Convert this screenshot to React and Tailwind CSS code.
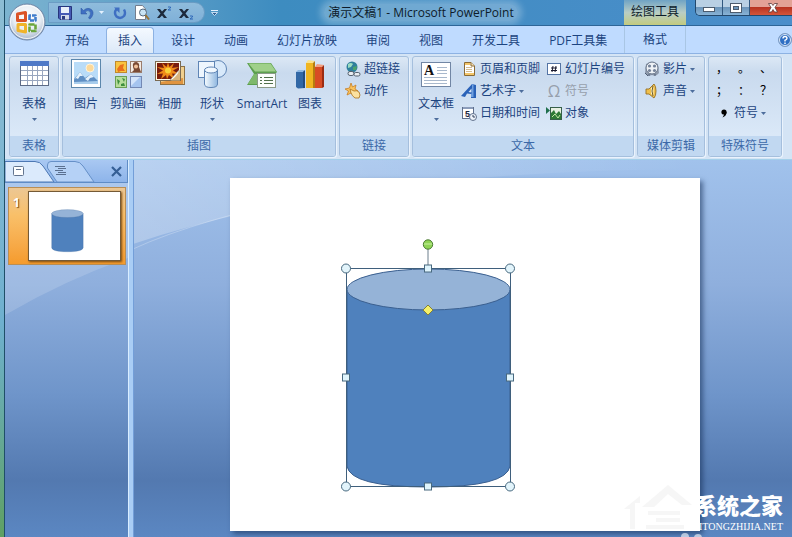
import { Fragment, useState } from "react";

const TABS = ["开始", "插入", "设计", "动画", "幻灯片放映", "审阅", "视图", "开发工具", "PDF工具集"];

const MARKS = ["，", "。", "、", "；", "：", "？"];

function Caret({ light = false }) {
  return (
    <svg className="h-[3px] w-[5px] shrink-0" viewBox="0 0 5 3">
      <path d="M0 0H5L2.5 3Z" fill={light ? "#e4f1ff" : "#4d6d9c"} />
    </svg>
  );
}

/* ---------- large icons, 32x32 ---------- */

function TableIcon() {
  return (
    <svg className="size-8" viewBox="0 0 32 32">
      <rect x="2.5" y="3.5" width="28" height="24" fill="#fff" stroke="#5d6b86" />
      <rect x="2" y="3" width="29" height="5" fill="#4f79c7" />
      <path d="M3 12.500H30M3 17.500H30M3 22.500H30M9.500 8V27M14.500 8V27M19.500 8V27M24.500 8V27" stroke="#98a6bf" fill="none" />
    </svg>
  );
}

function PictureIcon() {
  return (
    <svg className="size-8" viewBox="0 0 32 32">
      <rect x="1.500" y="1.500" width="29" height="28" fill="#fff" stroke="#5c87ac" />
      <rect x="4" y="4" width="24" height="22" fill="#b9dcf8" />
      <circle cx="20" cy="10" r="4" fill="#fbd99a" stroke="#fff2d8" />
      <path d="M4 25V21L10 14L15 20L21 16L28 23V26H4Z" fill="#5f8fc4" />
      <path d="M4 22L10 14L13 18L10 18L8 21L6 20Z" fill="#e5f1fb" />
      <path d="M15 21L21 16L24 19L20 20L18 23Z" fill="#e5f1fb" />
      <path d="M4 26V24L28 23V26Z" fill="#a9cdec" />
    </svg>
  );
}

function ClipArtIcon() {
  return (
    <svg className="size-8" viewBox="0 0 32 32">
      <rect x="3.500" y="3.500" width="11" height="11" fill="#f9c440" stroke="#c08a2c" />
      <path d="M5 11L8 7L12 6L11 10L13 13H9L6 14Z" fill="#e8701c" />
      <rect x="18.500" y="3.500" width="11" height="11" fill="#f4ebe4" stroke="#9a7c6c" />
      <path d="M21 9Q20 4 24.500 4Q28 5 27 9L29 14H20L22 12Z" fill="#7b4a34" />
      <circle cx="24" cy="8.500" r="2" fill="#f0c09a" />
      <rect x="3.500" y="18.500" width="11" height="11" fill="#b6dd9a" stroke="#6a9f55" />
      <path d="M5 21L8 23L6 27ZM10 20L13 21L12 24ZM9 26L12 25L13 28H9Z" fill="#3d8f3c" />
      <rect x="18.500" y="18.500" width="11" height="11" fill="#a5c4ef" stroke="#7388b4" />
      <path d="M19 19H28L19 28Z" fill="#d4e4fa" />
    </svg>
  );
}

function AlbumIcon() {
  return (
    <svg className="size-8" viewBox="0 0 32 32">
      <rect x="6.500" y="8.500" width="24" height="18" fill="#f0cf8e" stroke="#8b7046" />
      <path d="M7 24L29 20V26H7Z" fill="#e09440" />
      <rect x="1.500" y="3.500" width="25" height="19" fill="#fff8e4" stroke="#7a6a52" />
      <rect x="3" y="5" width="22" height="16" fill="#7a1c0c" />
      <path d="M14 4.500L15.500 9L20 5L18 10L25 9L19 12.500L25 16L18 15.500L20 21L15 17L13 21L12 17L7 21L9 15.500L3 16L9 12.500L3 9L10 10L8 5L12.500 9Z" fill="#f08a18" />
      <circle cx="14" cy="12.500" r="3" fill="#f8d038" />
      <path d="M25 12L16 22H25Z" fill="#fdfbf2" stroke="#9a8c70" strokeWidth="0.6" />
      <path d="M26 12Q23 18 17 22.500H26Z" fill="#d8b47c" />
    </svg>
  );
}

function ShapesIcon() {
  return (
    <svg className="size-8" viewBox="0 0 32 32">
      <defs>
        <linearGradient id="shapeFill" x1="0" x2="1">
          <stop offset="0" stopColor="#f5fbff" />
          <stop offset="1" stopColor="#8fb6df" />
        </linearGradient>
      </defs>
      <circle cx="22" cy="11" r="8.500" fill="#d8e9fa" stroke="#5f85b5" />
      <rect x="2.500" y="3.500" width="16" height="16" fill="#eef6fe" stroke="#5f85b5" />
      <path d="M8.500 12V26Q8.500 29.500 15 29.500Q21.500 29.500 21.500 26V12" fill="url(#shapeFill)" stroke="#5f85b5" />
      <ellipse cx="15" cy="12" rx="6.500" ry="3" fill="#f1f8ff" stroke="#5f85b5" />
    </svg>
  );
}

function SmartArtIcon() {
  return (
    <svg className="size-8" viewBox="0 0 32 32">
      <path d="M1 5H25L31 14L25 20V27H1L8 16Z" fill="#5c9f4e" />
      <path d="M2.500 5.500H24.500L30 13.500H9Z" fill="#9fd08a" />
      <path d="M8 16L2 26H12V16Z" fill="#7fb96c" />
      <rect x="11.500" y="15.500" width="18" height="14" fill="#fbfdfb" stroke="#8a9a88" />
      <path d="M14 19.500H16M14 22.500H16M14 25.500H16M18 19.500H27M18 22.500H27M18 25.500H27" stroke="#4f6e4a" />
    </svg>
  );
}

function ChartIcon() {
  return (
    <svg className="size-8" viewBox="0 0 32 32">
      <path d="M2 14L9 13L11 14V30L4 30.500L2 29Z" fill="#3268a6" />
      <path d="M2 14L4 12L11 12L9 14Z" fill="#8db8e4" />
      <path d="M9 14L11 12V30L9 30Z" fill="#244d80" />
      <path d="M12 5L19 4V30H12Z" fill="#f0b520" />
      <path d="M12 5L14 2L21 3L19 5Z" fill="#fbe28a" />
      <path d="M19 5L21 3V30H19Z" fill="#b57d10" />
      <path d="M21 9L28 8V30H21Z" fill="#d84c24" />
      <path d="M21 9L23 6L30 7L28 9Z" fill="#f2a080" />
      <path d="M28 9L30 7V29L28 30Z" fill="#9c2c12" />
    </svg>
  );
}

function TextBoxIcon() {
  return (
    <svg className="size-8" viewBox="0 0 32 32">
      <rect x="1.500" y="4.500" width="29" height="24" fill="#fff" stroke="#7186a4" />
      <path d="M17 9.500H27M17 12.500H27M17 15.500H27M4 19.500H27M4 22.500H27M4 25.500H27" stroke="#a8b8cc" />
      <text x="4" y="17" fontSize="14" fontWeight="bold" fontFamily="Liberation Serif, serif" fill="#111">A</text>
    </svg>
  );
}

/* ---------- small icons, 16x16 ---------- */

function LinkIcon() {
  return (
    <svg className="size-4 shrink-0" viewBox="0 0 16 16">
      <circle cx="7" cy="6" r="5.500" fill="#2f7f9c" />
      <path d="M3 3Q6 1 8 3L6 6L3 7Z" fill="#9bdcc0" />
      <path d="M8 6L12 5L11 9L8 9Z" fill="#4ba36c" />
      <rect x="3" y="10.500" width="6" height="4" rx="2" fill="#e8edf2" stroke="#55606e" />
      <rect x="9" y="11.500" width="6" height="3.500" rx="1.700" fill="#e8edf2" stroke="#55606e" />
    </svg>
  );
}

function ActionIcon() {
  return (
    <svg className="size-4 shrink-0" viewBox="0 0 16 16">
      <path d="M6 0L7.500 4L11 2L10 6L13 8L9 9L9 13L6 10L2 12L3.500 8L0 6L4.500 5Z" fill="#fbc35c" stroke="#c67f24" strokeWidth="0.8" />
      <path d="M5 6L9 8Q12 7 14 9Q16 12 14 15H10Q7 13 6 10Z" fill="#fbe1a0" stroke="#a9711e" strokeWidth="0.8" />
    </svg>
  );
}

function HeaderFooterIcon() {
  return (
    <svg className="size-4 shrink-0" viewBox="0 0 16 16">
      <path d="M3.500 1.500H10L13.500 5V14.500H3.500Z" fill="#fff" stroke="#8a6b36" />
      <path d="M4 2H9.500V4H4ZM4 12H13V14H4Z" fill="#f4c66a" />
      <path d="M10 1.500V5H13.500" fill="#f7e2b4" stroke="#8a6b36" />
      <path d="M5 6.500H11M5 8.500H11M5 10.500H11" stroke="#d5bd90" />
    </svg>
  );
}

function WordArtIcon() {
  return (
    <svg className="size-4 shrink-0" viewBox="0 0 16 16">
      <path d="M0 13L11 1L15 2V15H10V11L6 10.500L4 14Z" fill="#2a62b8" />
      <path d="M7.500 9L10.500 5.500V9.500Z" fill="#d4e5fa" />
      <path d="M11 1L12.500 2V14H10V11L11 10Z" fill="#6fa0e0" />
    </svg>
  );
}

function DateIcon() {
  return (
    <svg className="size-4 shrink-0" viewBox="0 0 16 16">
      <rect x="1.500" y="2.500" width="11" height="11" fill="#fff" stroke="#5f6f8c" />
      <rect x="2" y="2" width="10" height="2" fill="#8b9cba" />
      <text x="4" y="12" fontSize="9" fontWeight="bold" fontFamily="Liberation Sans, sans-serif" fill="#1a2540">5</text>
      <circle cx="12" cy="12" r="3.500" fill="#eef3fa" stroke="#63738e" />
      <path d="M12 10V12H14" stroke="#32415c" fill="none" />
    </svg>
  );
}

function SlideNumberIcon() {
  return (
    <svg className="size-4 shrink-0" viewBox="0 0 16 16">
      <rect x="1.500" y="2.500" width="13" height="11" fill="#fff" stroke="#5474a4" />
      <path d="M7 5L6 11M10 5L9 11M5 7H11M5 9.500H11" stroke="#1a1a2e" fill="none" />
    </svg>
  );
}

function ObjectIcon() {
  return (
    <svg className="size-4 shrink-0" viewBox="0 0 16 16">
      <rect x="4.500" y="2.500" width="11" height="12" fill="#e8f0e2" stroke="#38604a" />
      <path d="M5 14V8L8 5L10 9L13 6L15 9V14Z" fill="#2f7a36" />
      <path d="M6 12L9 9L12 13L14 10" stroke="#c3e6a4" fill="none" />
      <path d="M0 2L4 5.500L0 9Z" fill="#1f6f4c" />
    </svg>
  );
}

function MovieIcon() {
  return (
    <svg className="size-4 shrink-0" viewBox="0 0 16 16">
      <path d="M2 3Q8 -1 14 3L15 12Q12 16 8 14Q3 16 1 12Z" fill="#8e9aac" />
      <circle cx="8" cy="7" r="6" fill="#eef2f6" stroke="#67758a" />
      <circle cx="5.500" cy="5" r="1.600" fill="#75839a" />
      <circle cx="10.500" cy="5" r="1.600" fill="#75839a" />
      <circle cx="5.500" cy="9.500" r="1.600" fill="#75839a" />
      <circle cx="10.500" cy="9.500" r="1.600" fill="#75839a" />
      <path d="M1 12L4 15M5 13V15M11 13V15" stroke="#4f5d74" />
    </svg>
  );
}

function SoundIcon() {
  return (
    <svg className="size-4 shrink-0" viewBox="0 0 16 16">
      <path d="M2 6H5L10 1Q12 3 12 8Q12 13 10 15L5 11H2Z" fill="#f0c04c" stroke="#967022" strokeWidth="0.9" />
      <path d="M7 5V11L9.500 13V3Z" fill="#fdf0b8" />
      <path d="M9 3Q7 8 9 13" stroke="#6b5a30" fill="none" />
    </svg>
  );
}

function CommaIcon() {
  return (
    <svg className="h-4 w-[22px] shrink-0" viewBox="0 0 22 16">
      <circle cx="15" cy="7" r="2.600" fill="#000" />
      <path d="M17.600 7Q17.600 11 13.500 12.500Q15.500 10 15 8Z" fill="#000" />
    </svg>
  );
}

/* ---------- title bar icons ---------- */

function SaveIcon() {
  return (
    <svg className="size-4" viewBox="0 0 16 16">
      <path d="M1.500 1.500H14.500V14.500H3L1.500 13Z" fill="#4659b4" stroke="#26357c" />
      <rect x="4" y="2" width="8" height="6" fill="#e9effa" />
      <rect x="4" y="10" width="8" height="4.500" fill="#d3d9e8" />
      <rect x="5" y="11" width="3" height="3.500" fill="#2b3a80" />
    </svg>
  );
}

function UndoIcon() {
  return (
    <svg className="size-4" viewBox="0 0 16 16">
      <path d="M2 3V9H8L6 7Q9 4.500 11 6.500Q12.500 9 9.500 13L11 14Q16 9 13 5Q9 1.500 4.500 5.500Z" fill="#3f6fc2" stroke="#2c569f" strokeWidth="0.5" />
    </svg>
  );
}

function RedoIcon() {
  return (
    <svg className="size-4" viewBox="0 0 16 16">
      <path d="M4.500 4Q1.500 8 4.500 11.500Q8.500 14.500 12 11Q14 8 12 4.500" stroke="#3f6fc2" strokeWidth="2.400" fill="none" />
      <path d="M2 2.500H7.500V8Z" fill="#3f6fc2" />
    </svg>
  );
}

function PreviewIcon() {
  return (
    <svg className="size-4" viewBox="0 0 16 16">
      <path d="M1.500 0.500H8.500L11.500 4V14.500H1.500Z" fill="#fff" stroke="#747e8e" />
      <circle cx="9" cy="7.500" r="3.500" fill="#c9e4f5" stroke="#56697e" />
      <path d="M11.500 10L15 14.500" stroke="#9c7434" strokeWidth="2" />
    </svg>
  );
}

function ScriptIcon({ low = false }) {
  return (
    <svg className="size-4" viewBox="0 0 16 16">
      <path d="M1 4H4L6 6.500L8.500 4H11L7.500 8.500L11 13H8L6 10.500L3.500 13H1L4.500 8.500Z" fill="#1d2a3c" />
      <path d={low ? "M12 11H14.500V12L12 14H15" : "M12 2H14.500V3L12 5H15"} stroke="#2f68b8" fill="none" />
    </svg>
  );
}

function OfficeOrb() {
  return (
    <svg className="size-10" viewBox="0 0 40 40">
      <defs>
        <radialGradient id="orb" cx="0.5" cy="0.35" r="0.65">
          <stop offset="0" stopColor="#ffffff" />
          <stop offset="0.6" stopColor="#e6ecf3" />
          <stop offset="1" stopColor="#a3b3ca" />
        </radialGradient>
      </defs>
      <circle cx="20" cy="20" r="18" fill="url(#orb)" stroke="#6f86a6" />
      <circle cx="20" cy="20" r="16.500" fill="none" stroke="#fff" opacity="0.8" />
      <g fill="none" strokeLinejoin="round">
        <path d="M18.500 10.500L10.500 12V18.500H18.500Z" stroke="#db5326" strokeWidth="3" />
        <path d="M18.500 22.500H11V28.500L18.500 30Z" stroke="#f0b32a" strokeWidth="3" />
        <path d="M22.500 14V18.500H28.500V13.500H22.500Z" stroke="#3f7ccc" strokeWidth="2.600" strokeDasharray="4 1" />
        <path d="M22.500 22.500H28.500V29H22.500Z" stroke="#6aa53c" strokeWidth="2.600" strokeDasharray="5 1" />
      </g>
    </svg>
  );
}

/* ---------- ribbon pieces ---------- */

function BigButton({ icon, label, caret, width = "w-[42px]" }) {
  return (
    <button className={"flex flex-col items-center " + width}>
      {icon}
      <span className="mt-1 leading-5 whitespace-nowrap">{label}</span>
      {caret && <span className="mt-1 flex"><Caret /></span>}
    </button>
  );
}

function SmallButton({ icon, label, caret, disabled }) {
  return (
    <button
      disabled={disabled}
      className={"flex h-[22px] items-center gap-[3px] whitespace-nowrap " + (disabled ? "text-[#97a0ac]" : "")}
    >
      {icon}
      <span>{label}</span>
      {caret && <Caret />}
    </button>
  );
}

function Group({ title, className = "", children }) {
  return (
    <section className="flex flex-col overflow-hidden rounded-[3px] border border-[#a5bfdd] bg-linear-to-b from-[#dce8f5] from-0% via-[#c9daee] via-16% to-[#e0edfb] shadow-[1px_1px_0_#eaf3fd]">
      <div className={"flex h-[79px] items-start pt-px " + className}>{children}</div>
      <h2 className="bg-[#c1d8f1] text-center leading-5 whitespace-nowrap text-[#3c69a8]">{title}</h2>
    </section>
  );
}

function Cylinder() {
  return (
    <g stroke="#3a5f8f" strokeWidth="1">
      <path d="M117 111.500V288Q120 309 198.500 309Q277 309 280 288V111.500Z" fill="#4f81bd" />
      <ellipse cx="198.500" cy="111.500" rx="81.500" ry="20.500" fill="#95b3d7" />
    </g>
  );
}

const CORNERS = [[116, 90.5], [280, 90.5], [116, 308.5], [280, 308.5]];
const SIDES = [[198, 90.5], [116, 199.5], [280, 199.5], [198, 308.5]];

function Slide() {
  return (
    <svg className="block w-full bg-white shadow-[3px_3px_5px_rgba(25,50,90,0.6)]" viewBox="0 0 470 353">
      <Cylinder />
      <rect x="116.500" y="90.500" width="164" height="218" fill="none" stroke="#3f5f7c" />
      <path d="M198 71V87" stroke="#6c7f8c" />
      <circle cx="198" cy="66.500" r="4.700" fill="#8fd455" stroke="#4b7a35" />
      <path d="M194 66H202" stroke="#c9f0a4" />
      {CORNERS.map(([x, y]) => (
        <circle key={x + "-" + y} cx={x} cy={y} r="4.500" fill="#e2f4fb" stroke="#48697f" />
      ))}
      {SIDES.map(([x, y]) => (
        <rect key={x + "-" + y} x={x - 3.5} y={y - 3.5} width="7" height="7" fill="#dff4fc" stroke="#48697f" />
      ))}
      <path d="M198 127L203 132L198 137L193 132Z" fill="#f4f06a" stroke="#83803a" />
    </svg>
  );
}

function TitleBar() {
  return (
    <header className="flex h-[25px] items-center bg-linear-to-r from-[#7db4d0] via-[#3d8cc0] via-35% to-[#4b8ecb]">
      <div className="ml-[43px] flex h-[21px] items-center rounded-r-full border border-[#6b9cc4] bg-linear-to-b from-[#8fbcdc] to-[#7fb0d8] pr-[10px] pl-2">
        <button aria-label="保存"><SaveIcon /></button>
        <button aria-label="撤消" className="ml-[6px]"><UndoIcon /></button>
        <button aria-label="撤消列表" className="ml-1"><Caret light /></button>
        <button aria-label="恢复" className="ml-2"><RedoIcon /></button>
        <button aria-label="打印预览" className="ml-[6px]"><PreviewIcon /></button>
        <button aria-label="上标" className="ml-[6px]"><ScriptIcon /></button>
        <button aria-label="下标" className="ml-[6px]"><ScriptIcon low /></button>
      </div>
      <button aria-label="自定义快速访问工具栏" className="ml-[6px]">
        <svg className="h-[6px] w-[7px]" viewBox="0 0 7 6">
          <path d="M0 0.500H7" stroke="#e4f1ff" />
          <path d="M0.500 2.500H6.500L3.500 5.500Z" fill="#2d5f95" stroke="#e4f1ff" strokeWidth="0.800" />
        </svg>
      </button>
      <h1 className="flex-1 text-center whitespace-nowrap text-[#0d1b2a]">
        <span className="rounded-full bg-white/25 px-1 shadow-[0_0_6px_4px_rgba(255,255,255,0.25)]">演示文稿1 - Microsoft PowerPoint</span>
      </h1>
      <div className="h-full w-[62px] bg-linear-to-b from-[#6fa3c4] via-[#b9cdc4] to-[#c3cb7e] text-center leading-6 text-[#0d1b2a]">绘图工具</div>
      <div className="ml-[9px] flex h-4 w-[97px] self-start overflow-hidden rounded-bl-[5px] border-b border-l border-[#23486c]">
        <button aria-label="最小化" className="flex w-[27px] items-center justify-center border-r border-[#31587f] bg-linear-to-b from-[#b9d0e4] from-45% via-[#6d96bb] via-50% to-[#88b3d6]">
          <svg className="h-3 w-3" viewBox="0 0 12 12"><rect x="0.500" y="5.500" width="11" height="4" fill="#fff" stroke="#4c5c6e" /></svg>
        </button>
        <button aria-label="最大化" className="flex w-[27px] items-center justify-center border-r border-[#31587f] bg-linear-to-b from-[#b9d0e4] from-45% via-[#6d96bb] via-50% to-[#88b3d6]">
          <svg className="h-3 w-3" viewBox="0 0 12 12">
            <rect x="0.500" y="1.500" width="11" height="9" fill="#fff" stroke="#4c5c6e" />
            <rect x="3.500" y="4.500" width="5" height="3" fill="#6d96bb" stroke="#4c5c6e" />
          </svg>
        </button>
        <button aria-label="关闭" className="flex flex-1 items-center justify-center bg-linear-to-b from-[#e3a296] from-45% via-[#b93422] via-50% to-[#d4553a] pl-1">
          <svg className="h-3 w-3" viewBox="0 0 12 12">
            <path d="M1.500 1.500H4.500L6 3.500L7.500 1.500H10.500L8 5.500L10.500 10H7.500L6 7.500L4.500 10H1.500L4 5.500Z" fill="#fff" stroke="#5b3a3a" strokeWidth="0.800" />
          </svg>
        </button>
      </div>
    </header>
  );
}

function TabRow({ active, onPick }) {
  return (
    <nav className="flex h-7 items-end border-t border-[#2d6598] bg-[#bfdbff]">
      <div className="ml-12 flex flex-1 gap-[5px]">
        {TABS.map((tab) => (
          <button
            key={tab}
            onClick={() => onPick(tab)}
            className={
              "h-[26px] rounded-t-[4px] border border-b-0 px-[11px] whitespace-nowrap " +
              (active === tab
                ? "border-[#8db2e3] bg-linear-to-b from-[#f4f9ff] to-[#dce9f8]"
                : "border-transparent")
            }
          >
            {tab}
          </button>
        ))}
      </div>
      <button className="h-[27px] w-[62px] border-x border-[#a9c6e4]">格式</button>
      <div className="flex h-full w-[106px] items-center justify-end">
        <button aria-label="帮助">
          <svg className="size-[14px]" viewBox="0 0 14 14">
            <circle cx="7" cy="7" r="6.500" fill="#2f6fc4" stroke="#7f9cc0" />
            <circle cx="7" cy="7" r="5.500" fill="none" stroke="#dbe9fa" />
            <path d="M5 5.500Q5 3.500 7 3.500Q9 3.500 9 5.300Q9 6.500 7 7.300V8.500M7 9.500V11" stroke="#fff" strokeWidth="1.400" fill="none" />
          </svg>
        </button>
      </div>
    </nav>
  );
}

function Ribbon() {
  return (
    <div className="flex gap-[3px] border-y border-t-[#8db2e3] border-b-[#a4d0ea] bg-[#d4e4f5] py-[2px] pl-1">
      <Group title="表格" className="w-[48px] justify-center">
        <BigButton icon={<TableIcon />} label="表格" caret />
      </Group>
      <Group title="插图" className="w-[272px] pl-[2px]">
        <BigButton icon={<PictureIcon />} label="图片" />
        <BigButton icon={<ClipArtIcon />} label="剪贴画" />
        <BigButton icon={<AlbumIcon />} label="相册" caret />
        <BigButton icon={<ShapesIcon />} label="形状" caret />
        <BigButton icon={<SmartArtIcon />} label="SmartArt" width="w-[58px]" />
        <BigButton icon={<ChartIcon />} label="图表" width="w-[38px]" />
      </Group>
      <Group title="链接" className="w-[68px] flex-col pl-[5px]">
        <SmallButton icon={<LinkIcon />} label="超链接" />
        <SmallButton icon={<ActionIcon />} label="动作" />
      </Group>
      <Group title="文本" className="w-[220px] gap-1 pl-[2px]">
        <BigButton icon={<TextBoxIcon />} label="文本框" caret />
        <div className="flex flex-col">
          <SmallButton icon={<HeaderFooterIcon />} label="页眉和页脚" />
          <SmallButton icon={<WordArtIcon />} label="艺术字" caret />
          <SmallButton icon={<DateIcon />} label="日期和时间" />
        </div>
        <div className="ml-[2px] flex flex-col">
          <SmallButton icon={<SlideNumberIcon />} label="幻灯片编号" />
          <SmallButton icon={<span className="w-4 text-center text-base leading-4">Ω</span>} label="符号" disabled />
          <SmallButton icon={<ObjectIcon />} label="对象" />
        </div>
      </Group>
      <Group title="媒体剪辑" className="w-[66px] flex-col pl-[6px]">
        <SmallButton icon={<MovieIcon />} label="影片" caret />
        <SmallButton icon={<SoundIcon />} label="声音" caret />
      </Group>
      <Group title="特殊符号" className="w-[72px] flex-col">
        <div className="grid w-full grid-cols-3 pr-1 pl-[2px] text-black">
          {MARKS.map((mark) => (
            <button key={mark} className="h-[22px]">{mark}</button>
          ))}
        </div>
        <SmallButton icon={<CommaIcon />} label="符号" caret />
      </Group>
    </div>
  );
}

function SidePane() {
  return (
    <aside className="relative w-[123px] shrink-0">
      <div className="flex h-[23px] items-start border-r border-b border-[#5f8cc6] bg-linear-to-b from-[#a9c8f2] to-[#8db4ea]">
        <button aria-label="幻灯片" className="relative">
          <svg className="block h-[22px] w-[50px]" viewBox="0 0 50 22">
            <path d="M0 1.500H30Q35 1.500 38 6L49 22H0Z" fill="#dbeafc" stroke="#4d78b4" />
            <rect x="8.500" y="6.500" width="10" height="9" rx="1" fill="#fff" stroke="#62748f" />
            <path d="M11 9.500H16" stroke="#62748f" />
          </svg>
        </button>
        <button aria-label="大纲" className="-ml-2">
          <svg className="block h-[22px] w-[50px]" viewBox="0 0 50 22">
            <path d="M0.500 5Q0.500 1.500 4 1.500H28Q33 1.500 36 6L47 22H10L0.500 8Z" fill="#b5d1f6" stroke="#6690c8" />
            <path d="M8 6.500H18M11 8.500H19M8 10.500H16M11 12.500H19M9 14.500H19" stroke="#5a6f8f" />
          </svg>
        </button>
        <button aria-label="关闭窗格" className="mt-[5px] mr-1 ml-auto">
          <svg className="block size-[13px]" viewBox="0 0 13 13">
            <path d="M2 2L11 11M11 2L2 11" stroke="#355f95" strokeWidth="2.200" />
          </svg>
        </button>
      </div>
      <button className="mt-1 ml-[3px] flex w-[118px] items-start border border-[#b98e55] bg-linear-to-b from-[#ecc793] from-0% via-[#f9c069] via-35% to-[#f59b2c] py-[3px] pr-1 pl-1 text-white">
        <span className="mt-1 w-[15px] text-left font-bold leading-4 [text-shadow:1px_1px_1px_#7a4a10]">1</span>
        <svg className="block flex-1 border border-[#755a36] bg-white shadow-[1px_1px_2px_#7a4a10]" viewBox="0 0 470 353">
          <Cylinder />
        </svg>
      </button>
    </aside>
  );
}

function Watermark() {
  return (
    <div className="absolute right-[9px] bottom-1 flex items-end text-white">
      <svg className="h-[50px] w-[68px] overflow-visible" viewBox="0 0 68 50">
        <path d="M0 26L16 13V20H11V46H6V26ZM18 24L44 2L68 22H58L44 11L30 24ZM24 28H56V32H24ZM32 35H56V39H32ZM22 42H60V46H22Z" fill="#f6f6f6" />
        <circle cx="61" cy="54" r="4" fill="#fff" opacity="0.6" />
        <circle cx="74" cy="55" r="4" fill="#fff" opacity="0.6" />
      </svg>
      <div className="flex flex-col items-end">
        <span className="text-[22px] leading-8 font-black">系统之家</span>
        <span className="font-['Liberation_Serif',serif] text-[10px] leading-3">XITONGZHIJIA.NET</span>
      </div>
    </div>
  );
}

function Workspace() {
  return (
    <div className="relative flex flex-1 overflow-hidden bg-[linear-gradient(to_bottom,#a1c2ec_0%,#8fafdd_33%,#6f95ca_62%,#5379b0_85%,#5b87c2_100%)]">
      <svg className="absolute inset-0 size-full" viewBox="0 0 787 377" preserveAspectRatio="none">
        <defs>
          <linearGradient id="swoosh" x1="0" x2="1">
            <stop offset="0" stopColor="#fff" stopOpacity="0.26" />
            <stop offset="0.85" stopColor="#fff" stopOpacity="0" />
          </linearGradient>
        </defs>
        <path d="M0 0H123V98Q60 120 0 155Z" fill="#fff" opacity="0.15" />
        <path d="M128 0H787V10Q380 0 128 84Z" fill="url(#swoosh)" />
        <path d="M128 89Q190 60 330 30" stroke="#fff" opacity="0.25" fill="none" />
      </svg>
      <SidePane />
      <div className="relative w-[5px] shrink-0 border-l border-[#d9edff] bg-[#a9cdf5]" />
      <main className="relative min-w-0 flex-1 border-l border-[#739ed8] pt-[18px] pr-[92px] pb-[6px] pl-24">
        <Slide />
      </main>
      <Watermark />
    </div>
  );
}

export default function App() {
  const [tab, setTab] = useState("插入");

  return (
    <Fragment>
      <div className="flex min-h-screen overflow-hidden bg-[#bfdbff] font-['Open_Sans','Noto_Sans_CJK_SC',sans-serif] text-xs text-[#1c4480]">
        <div className="w-[5px] shrink-0 border-r border-[#1f4f68] bg-linear-to-b from-[#8dbdd4] from-0% via-[#6fb0cf] via-60% to-[#5fa062]" />
        <div className="flex min-w-0 flex-1 flex-col">
          <TitleBar />
          <TabRow active={tab} onPick={setTab} />
          <Ribbon />
          <Workspace />
        </div>
      </div>
      <button aria-label="Office" className="absolute top-[2px] left-[7px]">
        <OfficeOrb />
      </button>
    </Fragment>
  );
}
